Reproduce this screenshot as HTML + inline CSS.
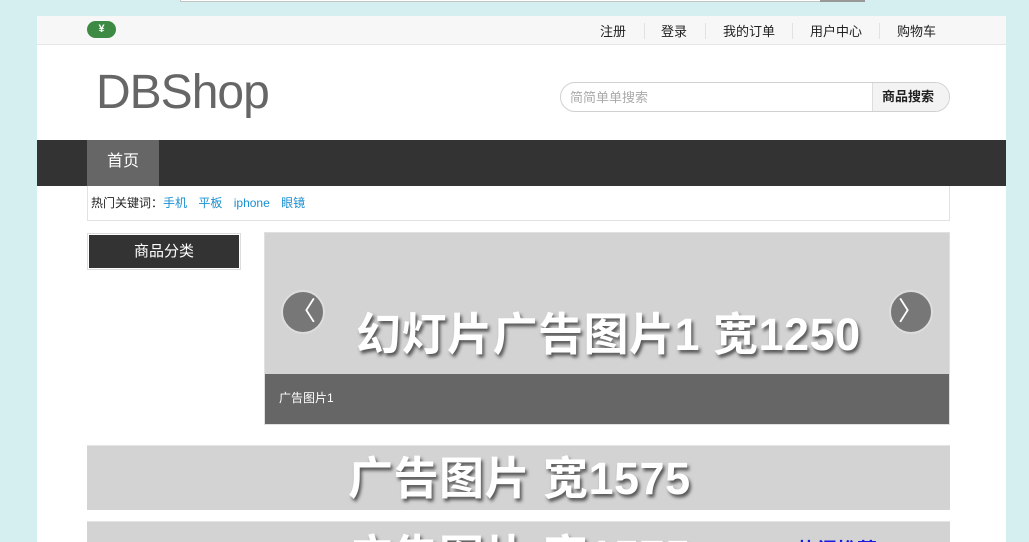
<!DOCTYPE html>
<html><head><meta charset="utf-8">
<style>
*{margin:0;padding:0;box-sizing:border-box}
html,body{width:1029px;height:542px;overflow:hidden}
body{background:#d5eff0;font-family:"Liberation Sans","Noto Sans CJK SC",sans-serif;position:relative}
.abs{position:absolute}
.page{left:37px;top:16px;width:969px;height:526px;background:#fff}
.topbar{left:37px;top:16px;width:969px;height:29px;background:#f7f7f7;border-bottom:1px solid #e6e6e6}
.yen{left:87px;top:21px;width:29px;height:17px;border-radius:9px;background:#3d8a45;color:#fff;font-size:11px;font-weight:bold;text-align:center;line-height:17px}
.links{top:17px;height:29px;font-size:13px;color:#222;line-height:30px}
.sep{top:23px;width:1px;height:16px;background:#e2e2e2}
.logo{left:96px;top:65px;font-size:48px;color:#666;letter-spacing:-1px}
.search{left:560px;top:82px;width:390px;height:30px;border:1px solid #d0d0d0;border-radius:15px;background:#fff;overflow:hidden}
.search .ph{position:absolute;left:9px;top:0;line-height:29px;font-size:13px;color:#aaa}
.search .btn{position:absolute;right:0;top:0;width:77px;height:28px;background:#f3f3f3;border-left:1px solid #ddd;font-size:13px;font-weight:bold;color:#222;line-height:28px;text-align:center;padding-right:6px}
.nav{left:37px;top:140px;width:969px;height:46px;background:#333}
.home{left:87px;top:140px;width:72px;height:46px;background:#666;color:#fff;font-size:16px;text-align:center;line-height:44px}
.hot{left:87px;top:186px;width:863px;height:35px;border:1px solid #e2e2e2;border-top:none;font-size:12px;line-height:34px;color:#222;padding-left:3px}
.hot a{color:#1a8fd1;text-decoration:none;margin-left:8px}
.cat{left:87px;top:233px;width:154px;height:37px;border:1px solid #ddd;background:#333;color:#fff;font-size:15px;text-align:center;line-height:36px;box-shadow:inset 0 0 0 1px #fff}
.slide{left:264px;top:232px;width:686px;height:193px;background:#d3d3d3;border:1px solid #e0e0e0}
.big{color:#fff;font-weight:bold;text-shadow:2px 3px 3px #555;white-space:nowrap}
.cap{left:265px;top:374px;width:684px;height:50px;background:#666;color:#fff;font-size:12px;line-height:48px;padding-left:14px}
.arr{width:44px;height:44px;border-radius:50%;background:#777;border:2px solid #ddd;color:#fff;font-size:26px;text-align:center;line-height:38px}
.ad{left:87px;width:863px;background:#d3d3d3;border-top:1px solid #e4e4e4}
</style></head><body>
<div class="abs" style="left:180px;top:0;width:685px;height:2px;border:1px solid #c4c4c4;border-top:none;background:#fff"></div>
<div class="abs" style="left:820px;top:0;width:45px;height:2px;background:#999"></div>
<div class="abs page"></div>
<div class="abs topbar"></div>
<div class="abs yen">¥</div>
<div class="abs links" style="left:600px">注册</div>
<div class="abs sep" style="left:644px"></div>
<div class="abs links" style="left:661px">登录</div>
<div class="abs sep" style="left:705px"></div>
<div class="abs links" style="left:723px">我的订单</div>
<div class="abs sep" style="left:792px"></div>
<div class="abs links" style="left:810px">用户中心</div>
<div class="abs sep" style="left:879px"></div>
<div class="abs links" style="left:897px">购物车</div>
<div class="abs logo">DBShop</div>
<div class="abs search"><span class="ph">简简单单搜索</span><span class="btn">商品搜索</span></div>
<div class="abs nav"></div>
<div class="abs home">首页</div>
<div class="abs hot">热门关键词：<a style="margin-left:0">手机</a> <a>平板</a> <a>iphone</a> <a>眼镜</a></div>
<div class="abs cat">商品分类</div>
<div class="abs slide"></div>
<div class="abs big" style="left:356px;top:298px;font-size:45px;letter-spacing:0.5px">幻灯片广告图片1 宽1250</div>
<div class="abs arr" style="left:281px;top:290px">〈</div>
<div class="abs arr" style="left:889px;top:290px">〉</div>
<div class="abs cap">广告图片1</div>
<div class="abs ad" style="top:445px;height:65px"></div>
<div class="abs big" style="left:348px;top:442px;font-size:45px;letter-spacing:0.5px">广告图片 宽1575</div>
<div class="abs ad" style="top:521px;height:21px;overflow:hidden">
<div class="abs big" style="left:261px;top:-2px;font-size:45px;letter-spacing:0.5px">广告图片 宽1575</div>
<div class="abs" style="left:710px;top:12px;font-size:20px;font-weight:bold;color:#1a1ae0;white-space:nowrap">热门推荐</div>
</div>
</body></html>
